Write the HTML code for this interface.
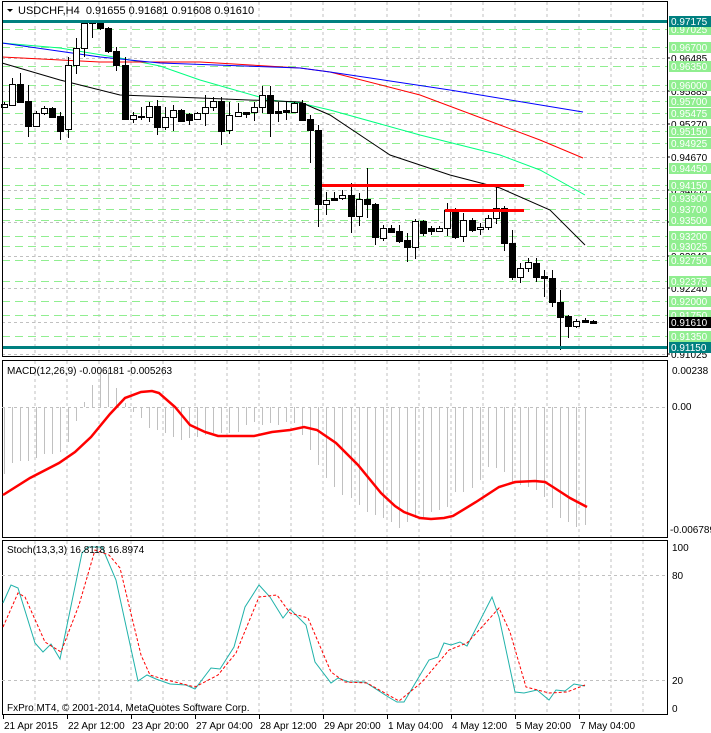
<!DOCTYPE html>
<html><head><meta charset="utf-8"><style>
html,body{margin:0;padding:0;background:#fff;width:711px;height:733px;overflow:hidden}
svg{display:block;font-family:"Liberation Sans",sans-serif}
</style></head><body>
<svg id="s" width="711" height="733" xmlns="http://www.w3.org/2000/svg"></svg>
<script>
var s=document.getElementById('s'),h='';
function Y(p){return 21+(0.97175-p)*5411;}
// vertical grids
var vg='';
for(var x=35;x<=643;x+=32){vg+='<line x1="'+x+'" y1="Y1" x2="'+x+'" y2="Y2" stroke="#c0c0c0" stroke-dasharray="3,3"/>';}
h+=vg.replace(/Y1/g,2).replace(/Y2/g,356);
h+=vg.replace(/Y1/g,361).replace(/Y2/g,537);
h+=vg.replace(/Y1/g,541).replace(/Y2/g,714);
// gray horizontal
[0.96485,0.95885,0.95270,0.94670,0.94055,0.93460,0.92840,0.92240,0.91610,0.91025].forEach(function(p){var y=Math.round(Y(p))+0.5;h+='<line x1="2" y1="'+y+'" x2="668" y2="'+y+'" stroke="#c0c0c0" stroke-dasharray="3,3"/>';});
var greens=[0.97025,0.96700,0.96350,0.96000,0.95700,0.95475,0.95150,0.94925,0.94450,0.94150,0.93900,0.93700,0.93500,0.93200,0.93025,0.92750,0.92375,0.92000,0.91750,0.91350];
greens.forEach(function(p){var y=Math.round(Y(p))+0.5;h+='<line x1="2" y1="'+y+'" x2="668" y2="'+y+'" stroke="#90ee90" stroke-dasharray="8,5"/>';});
// MAs
function pl(pts,c,w,d){return '<polyline fill="none" stroke="'+c+'" stroke-width="'+(w||1)+'"'+(d?' stroke-dasharray="'+d+'"':'')+' points="'+pts+'"/>';}
h+=pl('2,43 60,48 120,58 160,66 200,80 270,100 300,103 330,110 420,135 500,155 540,170 585,195','#00ff7f');
h+=pl('2,57 100,62 200,62 300,68 330,72 420,95 500,125 540,140 583,158','#ff0000');
h+=pl('2,43 100,57 160,63 300,68 330,72 450,90 583,112','#0000ff');
h+=pl('2,63 60,80 120,95 200,98 300,102 330,115 390,155 450,175 500,188 550,210 585,245','#000000');
// candles [bodyTop,bodyBot,wickTop,wickBot,white]
var c=[[104,107,102,108,1],[84,105,78,106,1],[84,102,73,103,0],[101,126,85,137,0],[113,126,111,127,1],[108,113,106,115,1],[108,117,107,118,0],[116,131,112,140,0],[65,129,57,138,1],[48,65,38,74,1],[23,48,20,57,1],[22,23,20,38,0],[23,28,20,30,0],[28,51,27,53,0],[51,65,47,71,0],[65,119,57,120,0],[115,119,112,123,1],[116,117,107,120,0],[106,117,102,122,1],[106,127,100,135,0],[117,127,107,130,1],[110,117,105,131,1],[110,121,109,122,0],[114,120,113,125,0],[113,119,112,120,1],[107,113,95,126,1],[101,107,97,111,1],[101,131,97,145,0],[115,130,102,134,1],[112,116,103,117,1],[112,114,112,118,0],[107,112,102,121,1],[95,107,86,113,1],[95,113,86,137,0],[111,113,102,122,0],[110,112,101,120,0],[103,112,102,113,1],[103,120,100,121,0],[119,130,115,163,0],[130,204,125,227,0],[200,204,192,215,1],[198,200,192,200,0],[195,198,190,200,1],[195,216,183,233,0],[199,216,193,226,1],[199,204,168,218,0],[204,237,203,245,0],[228,238,225,241,1],[228,232,225,233,0],[231,241,225,243,0],[240,247,233,262,0],[221,247,219,259,1],[221,233,220,236,0],[228,231,226,235,0],[228,231,226,232,1],[210,228,203,236,1],[210,237,208,239,0],[220,236,213,242,1],[220,230,218,232,0],[227,229,223,235,1],[218,227,215,230,1],[208,218,187,224,1],[208,243,206,251,0],[243,277,230,280,0],[268,277,263,283,1],[262,268,258,272,1],[263,277,258,282,0],[276,278,270,297,0],[278,302,270,307,0],[302,317,290,350,0],[316,326,315,338,0],[321,326,319,328,1],[320,322,318,323,0],[321,323,320,324,0]];
c.forEach(function(k,i){var x=Math.round(3.5+8.07*i);h+='<line x1="'+(x+0.5)+'" y1="'+k[2]+'" x2="'+(x+0.5)+'" y2="'+k[3]+'" stroke="#000"/>';
var bh=Math.max(1,k[1]-k[0]);h+='<rect x="'+(x-2.5)+'" y="'+(k[0]+0.5)+'" width="6" height="'+bh+'" fill="'+(k[4]?'#fff':'#000')+'" stroke="#000"/>';});
// red level lines
h+='<rect x="322" y="184" width="202" height="3" fill="#ff0000"/><rect x="445" y="209" width="79" height="3" fill="#ff0000"/>';
// teal lines
h+='<rect x="2" y="20" width="666" height="3" fill="#008080"/><rect x="2" y="346" width="666" height="3" fill="#008080"/>';
// borders
h+='<rect x="2.5" y="1.5" width="665" height="355" fill="none" stroke="#000"/>';
h+='<rect x="2.5" y="360.5" width="665" height="177" fill="none" stroke="#000"/>';
h+='<rect x="2.5" y="540.5" width="665" height="174" fill="none" stroke="#000"/>';
// title
h+='<polygon points="7,9 13,9 10,12" fill="#000"/><text x="18" y="14" font-size="11">USDCHF,H4&#160; 0.91655 0.91681 0.91608 0.91610</text>';
// price labels
function lab(p,bg,fg,y){y=y||Math.round(Y(p));return '<rect x="669" y="'+(y-5)+'" width="42" height="11" fill="'+bg+'"/><text x="671" y="'+(y+4)+'" font-size="10" fill="'+fg+'">'+p.toFixed(5)+'</text>';}
[0.96485,0.95885,0.95270,0.94670,0.94055,0.93460,0.92840,0.92240,0.91025].forEach(function(p){h+='<line x1="667" y1="'+Math.round(Y(p))+'" x2="670" y2="'+Math.round(Y(p))+'" stroke="#000"/><text x="671" y="'+(Math.round(Y(p))+4)+'" font-size="10">'+p.toFixed(5)+'</text>';});
greens.forEach(function(p){h+=lab(p,'#90ee90','#fff');});
h+=lab(0.91610,'#000','#fff');
h+=lab(0.97175,'#008080','#fff',21);h+=lab(0.91150,'#008080','#fff',347);
// MACD
h+='<line x1="2" y1="407.5" x2="668" y2="407.5" stroke="#c0c0c0" stroke-dasharray="3,3"/>';
var hb=[474,463,461,461,458,454,454,452,442,421,402,385,372,369,388,403,412,418,428,430,433,437,440,438,437,435,433,433,433,432,425,422,425,423,425,422,423,435,450,465,478,487,495,498,505,512,515,518,522,528,522,518,517,512,510,507,492,492,488,480,467,468,472,482,485,487,490,497,508,518,522,527,525];
hb.forEach(function(y,i){var x=Math.round(3.5+8.07*i)+0.5;h+='<line x1="'+x+'" y1="407" x2="'+x+'" y2="'+y+'" stroke="#c0c0c0"/>';});
h+=pl('3,495 30,478 59,463 75,452 91,437 110,414 125,398 141,392 152,391 159,393 175,407 190,425 205,432 218,436 254,436 272,432 290,430 304,427 317,430 336,443 358,465 381,493 395,506 404,512 420,518 431,519 444,518 453,516 476,502 499,487 515,482 535,481 545,482 553,487 570,498 587,507','#ff0000',2.5);
h+='<text x="7" y="374" font-size="10">MACD(12,26,9) -0.006181 -0.005263</text>';
h+='<text x="672" y="374" font-size="10">0.00238</text><text x="672" y="410" font-size="10">0.00</text><text x="670" y="533" font-size="10">-0.006789</text>';
// Stoch
h+='<line x1="2" y1="575.5" x2="668" y2="575.5" stroke="#c0c0c0" stroke-dasharray="3,3"/><line x1="2" y1="680.5" x2="668" y2="680.5" stroke="#c0c0c0" stroke-dasharray="3,3"/>';
h+=pl('3,603 11,585 18,588 35,643 43,652 51,644 60,659 82,553 88,547 102,547 116,580 138,681 147,675 156,679 170,684 186,685 195,689 211,668 220,669 234,647 245,607 259,585 270,597 283,618 290,609 306,625 315,662 331,683 338,678 349,682 365,682 390,698 397,702 404,702 429,660 438,657 444,643 451,645 460,642 467,646 492,597 499,617 515,692 524,693 537,690 549,700 556,690 565,691 574,684 585,686','#20b2aa');
h+=pl('3,627 18,593 25,597 45,642 61,652 79,605 95,550 109,555 120,568 141,655 150,675 163,679 195,687 218,675 236,653 259,597 277,595 290,613 308,618 331,672 345,682 367,683 399,701 422,682 449,650 467,643 481,628 499,608 510,632 526,687 549,693 567,692 585,685','#ff0000',1,'3,2');
h+='<text x="7" y="553" font-size="10">Stoch(13,3,3) 16.8118 16.8974</text>';
h+='<text x="7" y="711" font-size="10">FxPro MT4, © 2001-2014, MetaQuotes Software Corp.</text>';
h+='<text x="672" y="551" font-size="10">100</text><text x="672" y="579" font-size="10">80</text><text x="672" y="684" font-size="10">20</text><text x="672" y="712" font-size="10">0</text>';
// dates
var d=['21 Apr 2015','22 Apr 12:00','23 Apr 20:00','27 Apr 04:00','28 Apr 12:00','29 Apr 20:00','1 May 04:00','4 May 12:00','5 May 20:00','7 May 04:00'];
d.forEach(function(t,i){var x=3+64*i;h+='<line x1="'+(x+0.5)+'" y1="715" x2="'+(x+0.5)+'" y2="719" stroke="#000"/><text x="'+(x+1)+'" y="729" font-size="10">'+t+'</text>';});
s.innerHTML=h;
</script>
</body></html>
